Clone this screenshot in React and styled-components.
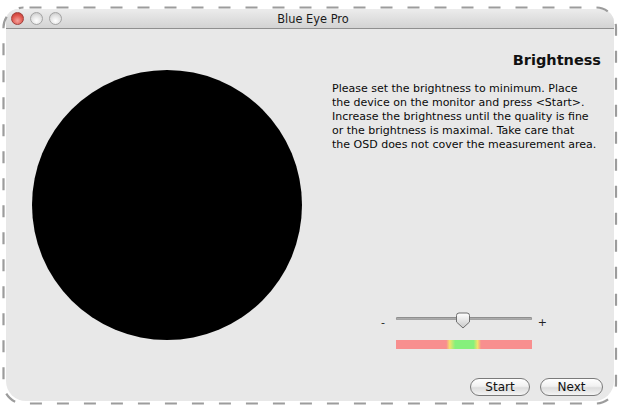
import React from "react";
import styled, { createGlobalStyle } from "styled-components";

const Global = createGlobalStyle`
  html, body { margin: 0; padding: 0; background: #ffffff; }
  body { font-family: "DejaVu Sans", "Liberation Sans", sans-serif; }
`;

const Frame = styled.div`
  position: relative;
  width: 618px;
  height: 406px;
  box-sizing: border-box;
  padding: 9px 4px 5px 6px;
  overflow: hidden;
`;

const Window = styled.div`
  height: 100%;
  display: flex;
  flex-direction: column;
  background: #e8e8e8;
  border-radius: 12px 14px 20px 20px;
  overflow: hidden;
`;

const TitleBar = styled.div`
  position: relative;
  height: 19px;
  flex: none;
  display: flex;
  align-items: center;
  justify-content: center;
  background: linear-gradient(#ececec, #d3d3d3);
  border-bottom: 1px solid #8f8f8f;
`;

const Lights = styled.div`
  position: absolute;
  left: 5px;
  top: 3px;
  display: flex;
  gap: 6px;
`;

const Light = styled.span`
  width: 13px;
  height: 13px;
  border-radius: 50%;
  box-sizing: border-box;
  border: 1px solid ${(p) => (p.$red ? "#a0403c" : "#a3a3a3")};
  background: ${(p) =>
    p.$red
      ? "radial-gradient(circle at 50% 70%, #f4a29c 0%, #e0584f 55%, #b8312b 100%)"
      : "radial-gradient(circle at 50% 70%, #ffffff 0%, #e2e2e2 55%, #bdbdbd 100%)"};
`;

const Title = styled.div`
  font-size: 11.4px;
  color: #1a1a1a;
  margin-left: 6px;
  margin-top: 1px;
`;

const Body = styled.div`
  flex: 1;
  display: flex;
  padding: 0 11px 0 26px;
  gap: 30px;
`;

const Circle = styled.div`
  width: 270px;
  height: 270px;
  margin-top: 41px;
  border-radius: 50%;
  background: #000;
  flex: none;
`;

const Panel = styled.div`
  flex: 1;
  display: flex;
  flex-direction: column;
  padding-bottom: 5px;
`;

const Heading = styled.h1`
  margin: 22px 2px 0 0;
  font-size: 14.5px;
  line-height: 18px;
  font-weight: bold;
  text-align: right;
  color: #111;
`;

const Text = styled.p`
  margin: 13px 0 0 0;
  font-size: 11px;
  line-height: 14px;
  color: #0a0a0a;
  white-space: nowrap;
`;

const Controls = styled.div`
  margin-top: auto;
  display: flex;
  flex-direction: column;
  align-items: flex-start;
`;

const SliderRow = styled.div`
  display: flex;
  align-items: center;
  height: 22px;
  margin-left: 49px;
`;

const Sign = styled.span`
  font-size: 11px;
  color: #222;
  width: 15px;
  text-align: ${(p) => p.$align};
  padding-top: 8px;
`;

const Track = styled.div`
  position: relative;
  width: 136px;
  height: 3px;
  border-radius: 2px;
  background: linear-gradient(#8d8d8d, #c8c8c8);
  box-shadow: inset 0 0 0 0.5px #888;
`;

const Thumb = styled.svg`
  position: absolute;
  left: 59px;
  top: -5px;
`;

const Meter = styled.div`
  margin: 11px 0 0 64px;
  width: 136px;
  height: 9px;
  background: linear-gradient(
    to right,
    #f88f8f 0%,
    #f88f8f 37%,
    #f2e36c 39.5%,
    #86f07c 43.5%,
    #86f07c 57%,
    #f2e36c 60%,
    #f88f8f 62.5%,
    #f88f8f 100%
  );
`;

const ButtonRow = styled.div`
  align-self: stretch;
  display: flex;
  justify-content: flex-end;
  gap: 10px;
  margin-top: 29px;
`;

const Button = styled.button`
  width: ${(p) => p.$w}px;
  height: 18px;
  padding: 0;
  border-radius: 9px;
  border: 1px solid #7a7a7a;
  background: linear-gradient(#ffffff 0%, #f1f1f1 45%, #dcdcdc 55%, #f4f4f4 100%);
  font-family: "DejaVu Sans", "Liberation Sans", sans-serif;
  font-size: 12px;
  color: #111;
  line-height: 16px;
`;

const Dashes = styled.svg`
  position: absolute;
  left: 0;
  top: 0;
  pointer-events: none;
`;

export default function App() {
  return (
    <Frame>
      <Global />
      <Window>
        <TitleBar>
          <Lights>
            <Light $red />
            <Light />
            <Light />
          </Lights>
          <Title>Blue Eye Pro</Title>
        </TitleBar>
        <Body>
          <Circle />
          <Panel>
            <Heading>Brightness</Heading>
            <Text>
              Please set the brightness to minimum. Place
              <br />
              the device on the monitor and press &lt;Start&gt;.
              <br />
              Increase the brightness until the quality is fine
              <br />
              or the brightness is maximal. Take care that
              <br />
              the OSD does not cover the measurement area.
            </Text>
            <Controls>
              <SliderRow>
                <Sign $align="left">-</Sign>
                <Track>
                  <Thumb width="16" height="17" viewBox="0 0 16 17">
                    <defs>
                      <linearGradient id="tg" x1="0" y1="0" x2="0" y2="1">
                        <stop offset="0" stopColor="#ffffff" />
                        <stop offset="1" stopColor="#c9c9c9" />
                      </linearGradient>
                    </defs>
                    <path
                      d="M1.5 3.5 Q1.5 1 4 1 H12 Q14.5 1 14.5 3.5 V10 L8 16 L1.5 10 Z"
                      fill="url(#tg)"
                      stroke="#6f6f6f"
                      strokeWidth="1"
                    />
                  </Thumb>
                </Track>
                <Sign $align="right">+</Sign>
              </SliderRow>
              <Meter />
              <ButtonRow>
                <Button $w={60}>Start</Button>
                <Button $w={63}>Next</Button>
              </ButtonRow>
            </Controls>
          </Panel>
        </Body>
      </Window>
      <Dashes width="618" height="406" viewBox="0 0 618 406">
        <rect
          x="3.5"
          y="7.5"
          width="612.5"
          height="396"
          rx="20"
          fill="none"
          stroke="#9c9c9c"
          strokeWidth="2.2"
          strokeDasharray="12 15"
          strokeDashoffset="-6"
        />
      </Dashes>
    </Frame>
  );
}
